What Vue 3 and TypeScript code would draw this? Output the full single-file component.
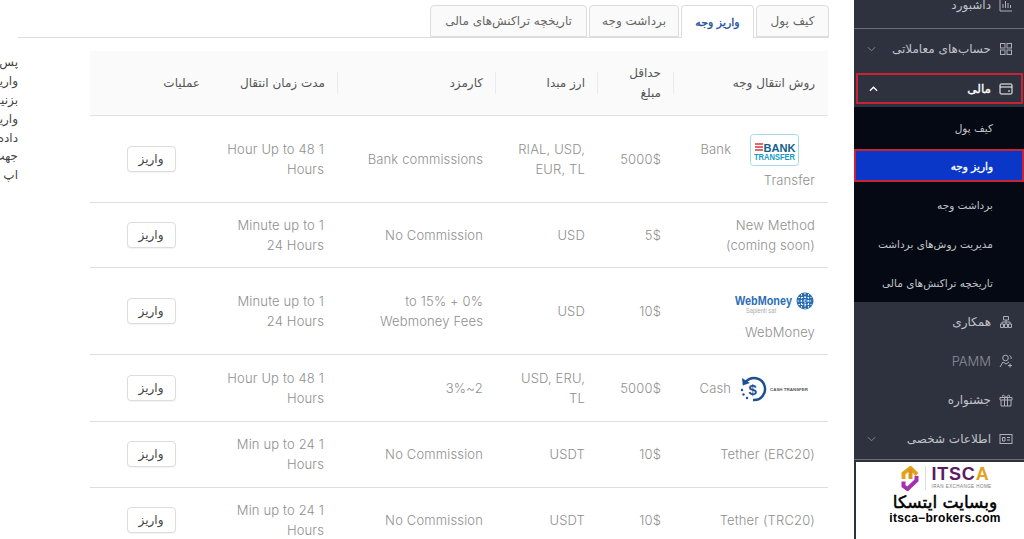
<script setup lang="ts">
interface Row { method: string; logo?: string; min: string; cur: string; fee: string; time: string; h: number }
const rows: Row[] = [
  { method: 'Bank Transfer', logo: 'bank', min: '5000$', cur: 'RIAL, USD, EUR, TL', fee: 'Bank commissions', time: '1 Hour Up to 48 Hours', h: 87 },
  { method: 'New Method (coming soon)', min: '5$', cur: 'USD', fee: 'No Commission', time: '1 Minute up to 24 Hours', h: 65 },
  { method: 'WebMoney', logo: 'wm', min: '10$', cur: 'USD', fee: '0% + 15% to Webmoney Fees', time: '1 Minute up to 24 Hours', h: 87 },
  { method: 'Cash', logo: 'cash', min: '5000$', cur: 'USD, ERU, TL', fee: '2~3%', time: '1 Hour Up to 48 Hours', h: 67 },
  { method: 'Tether (ERC20)', min: '10$', cur: 'USDT', fee: 'No Commission', time: '1 Min up to 24 Hours', h: 66 },
  { method: 'Tether (TRC20)', min: '10$', cur: 'USDT', fee: 'No Commission', time: '1 Min up to 24 Hours', h: 66 },
]
const tabs = ['کیف پول', 'واریز وجه', 'برداشت وجه', 'تاریخچه تراکنش‌های مالی']
const notes = ['پس از انتخاب روش', 'واریز روی دکمه', 'بزنید و مراحل', 'واریز را ادامه', 'داده و سپس', 'جهت پیگیری', 'اپ']
const sub = ['کیف پول', 'واریز وجه', 'برداشت وجه', 'مدیریت روش‌های برداشت', 'تاریخچه تراکنش‌های مالی']
</script>

<template>
  <div class="page">
    <div class="notes">
      <div v-for="n in notes" :key="n" class="note">{{ n }}</div>
    </div>

    <main class="main" dir="rtl">
      <nav class="tabs">
        <span v-for="(t, i) in tabs" :key="t" class="tab" :class="{ active: i === 1 }">{{ t }}</span>
      </nav>
      <table class="tbl">
        <colgroup>
          <col class="c1" /><col class="c2" /><col class="c3" /><col class="c4" /><col class="c5" /><col class="c6" />
        </colgroup>
        <thead>
          <tr>
            <th><span class="th">روش انتقال وجه</span></th>
            <th><span class="th">حداقل مبلغ</span></th>
            <th><span class="th">ارز مبدا</span></th>
            <th><span class="th">کارمزد</span></th>
            <th><span class="th">مدت زمان انتقال</span></th>
            <th><span class="th last">عملیات</span></th>
          </tr>
        </thead>
        <tbody>
          <tr v-for="r in rows" :key="r.method" :style="{ height: r.h + 'px' }">
            <td :class="{ haslogo: r.logo }">
              <svg v-if="r.logo === 'bank'" class="logo" width="80" height="32" viewBox="0 0 80 32">
                <rect x="15.500" y=".5" width="48" height="31" rx="3" fill="#fff" stroke="#a4d9e8" />
                <path d="M20 10h8M20 13h8M20 16h8" stroke="#d8373c" stroke-width="1.600" />
                <text x="28.500" y="17.500" class="bk1" textLength="32" lengthAdjust="spacingAndGlyphs">BANK</text>
                <text x="19" y="25.500" class="bk2" textLength="41" lengthAdjust="spacingAndGlyphs">TRANSFER</text>
              </svg>
              <svg v-if="r.logo === 'wm'" class="logo" width="80" height="32" viewBox="0 0 80 32">
                <text x="0" y="19" class="wm1" textLength="57" lengthAdjust="spacingAndGlyphs">WebMoney</text>
                <text x="11" y="27" class="wm2" textLength="30" lengthAdjust="spacingAndGlyphs">Sapienti sat</text>
                <circle cx="70" cy="15" r="8.500" fill="#2a6db5" />
                <path d="M63.500 11.500h13M62.500 15h15M63.500 18.500h13M66.500 8v14M70 7v16M73.500 8v14" stroke="#fff" stroke-width="1" stroke-dasharray="1.600 1.400" />
              </svg>
              <svg v-if="r.logo === 'cash'" class="logo" width="80" height="32" viewBox="0 0 80 32">
                <path d="M11 8.500A11 11 0 1 1 18 27" fill="none" stroke="#1c4f96" stroke-width="2.500" />
                <path d="M7 5l.8 7.500 7-2.500z" fill="#1c4f96" />
                <circle cx="7" cy="17" r="1.200" fill="#1c4f96" />
                <circle cx="8.500" cy="21.500" r="1.200" fill="#1c4f96" />
                <circle cx="12" cy="25" r="1.200" fill="#1c4f96" />
                <text x="13.500" y="21.500" class="cs1">$</text>
                <text x="35" y="17.500" class="cs2" textLength="38" lengthAdjust="spacingAndGlyphs">CASH TRANSFER</text>
              </svg>
              {{ r.method }}
            </td>
            <td>{{ r.min }}</td>
            <td>{{ r.cur }}</td>
            <td>{{ r.fee }}</td>
            <td class="tm">{{ r.time }}</td>
            <td class="act"><button class="btn">واریز</button></td>
          </tr>
        </tbody>
      </table>
    </main>

    <aside class="side" dir="rtl">
      <div class="item first">
        <svg class="ic" viewBox="0 0 14 14"><path d="M1 1v12h12M4 10V6M6.500 10V3M9 10V5M11.500 10V7" /></svg>
        <span>داشبورد</span>
      </div>
      <div class="rule"></div>
      <div class="item">
        <svg class="ic" viewBox="0 0 14 14"><rect x="1.500" y="1.500" width="4.500" height="4.500" /><rect x="8" y="1.500" width="4.500" height="4.500" /><rect x="1.500" y="8" width="4.500" height="4.500" /><rect x="8" y="8" width="4.500" height="4.500" /></svg>
        <span>حساب‌های معاملاتی</span>
        <svg class="chev" viewBox="0 0 10 6"><path d="M1 1l4 4 4-4" /></svg>
      </div>
      <div class="item open">
        <svg class="ic bright" viewBox="0 0 14 14"><rect x="1" y="2" width="12" height="10" rx="1" /><path d="M1 5h12M9 9h2" /></svg>
        <span>مالی</span>
        <svg class="chev up" viewBox="0 0 10 6"><path d="M1 5l4-4 4 4" /></svg>
      </div>
      <div class="subs">
        <div v-for="(s, i) in sub" :key="s" class="sub" :class="{ on: i === 1 }">{{ s }}</div>
      </div>
      <div class="item">
        <svg class="ic" viewBox="0 0 14 14"><path d="M4.500 1.500h5v3.500h-5zM1.500 9h3v3.500h-3zM5.500 9h3v3.500h-3zM9.500 9h3v3.500h-3zM7 5v4M3 9V7h8v2" /></svg>
        <span>همکاری</span>
      </div>
      <div class="item dim">
        <svg class="ic" viewBox="0 0 14 14"><circle cx="6.500" cy="4" r="2.800" /><path d="M1 13l3-5 3 2 3-2M10.500 1.500c1.500.5 2 2 1.500 3.500M11 9.500v4M9 11.500h4" /></svg>
        <span class="en">PAMM</span>
      </div>
      <div class="item">
        <svg class="ic" viewBox="0 0 14 14"><path d="M1 4.500h12v2.500H1zM2 7v6h10V7M5.500 4.500V13M8.500 4.500V13M4 4.500C2.500 2.500 4 .5 7 4.500c3-4 4.500-2 3 0" /></svg>
        <span>جشنواره</span>
      </div>
      <div class="item">
        <svg class="ic" viewBox="0 0 14 14"><rect x="1" y="2.500" width="12" height="9" /><path d="M8 5.500h3M8 8h3M3.500 9V5.500h2.500V9z" /></svg>
        <span>اطلاعات شخصی</span>
        <svg class="chev" viewBox="0 0 10 6"><path d="M1 1l4 4 4-4" /></svg>
      </div>
      <div class="rule low"></div>
      <div class="brand" dir="ltr">
        <div class="brand-top">
          <svg width="18" height="25" viewBox="0 0 18 25">
            <path d="M2.500 13V7.500L9.500 2 16 8.500" fill="none" stroke="#e5a11c" stroke-width="4" />
            <path d="M9.500 3v10" stroke="#d9951a" stroke-width="4" />
            <path d="M2.500 15.500v4.500l4 3 9-8.500V10" fill="none" stroke="#a62fb0" stroke-width="4" />
          </svg>
          <div class="itsca">
            <div class="itsca-t">ITSC<span class="gold">A</span></div>
            <div class="itsca-s">IRAN EXCHANGE HOME</div>
          </div>
        </div>
        <div class="brand-fa" dir="rtl">وبسایت ایتسکا</div>
        <div class="brand-url">itsca−brokers.com</div>
      </div>
    </aside>
  </div>
</template>

<style>
html, body { margin: 0; background: #fff; overflow: hidden; }
</style>

<style scoped>
.page {
  width: 1024px;
  height: 539px;
  display: flex;
  overflow: hidden;
  background: #fff;
  font-family: "Inter", "DejaVu Sans", sans-serif;
  color: #888;
}
.notes {
  width: 18px;
  flex: none;
  direction: rtl;
  padding-top: 53px;
  box-sizing: border-box;
}
.note {
  height: 18.900px;
  line-height: 19px;
  font-size: 12px;
  color: #444;
  white-space: nowrap;
  font-family: "DejaVu Sans", sans-serif;
}
.main {
  flex: none;
  width: 836px;
  box-sizing: border-box;
  padding: 5px 25px 0 0;
}
.tabs {
  display: flex;
  gap: 2px;
  height: 32px;
  border-bottom: 1px solid #ddd;
  font-family: "DejaVu Sans", sans-serif;
}
.tab {
  display: flex;
  align-items: center;
  justify-content: center;
  height: 32px;
  box-sizing: border-box;
  font-size: 12px;
  color: #666;
  background: #fafafa;
  border: 1px solid #ddd;
  border-radius: 4px 4px 0 0;
  width: 73px;
}
.tab:nth-child(3) { width: 90px; }
.tab:nth-child(4) { width: 157px; }
.tab.active {
  background: #fff;
  height: 33px;
  border-bottom: 0;
  color: #1f4fa0;
  font-size: 11px;
  -webkit-text-stroke: .35px #1f4fa0;
}
.tbl {
  width: 738px;
  margin: 13px 1px 0 0;
  table-layout: fixed;
  border-collapse: collapse;
  font-size: 13px;
  line-height: 20px;
  font-weight: 300;
  letter-spacing: .15px;
}
.c1 { width: 154px; }
.c2 { width: 76px; }
.c3 { width: 102px; }
.c4 { width: 158px; }
.c5 { width: 126px; }
.c6 { width: 122px; }
thead tr { height: 64px; background: #fafafa; border-bottom: 1px solid #e2e2e2; }
th {
  padding: 0 13px;
  font-size: 12px;
  font-weight: 400;
  color: #555;
  letter-spacing: 0;
  text-align: right;
  font-family: "DejaVu Sans", sans-serif;
  background: linear-gradient(#ececec, #ececec) no-repeat right center / 1px 22px;
}
th:first-child, th:last-child { background: none; }
.th { display: block; line-height: 20px; }
.th.last { padding-right: 0; margin-right: -1px; }
td {
  padding: 0 13px;
  text-align: right;
  border-bottom: 1px solid #dedede;
  vertical-align: middle;
  color: #8f8f8f;
}
td.haslogo { padding-top: 6px; }
td.tm { padding-right: 14px; }
.logo {
  direction: ltr;
  vertical-align: -16px;
  margin-bottom: 4px;
  overflow: visible;
}
.bk1 { font: 800 11px "Liberation Sans", sans-serif; fill: #12618c; letter-spacing: 0; }
.bk2 { font: 800 8.500px "Liberation Sans", sans-serif; fill: #139bc4; letter-spacing: 0; }
.wm1 { font: 700 13px "Liberation Sans", sans-serif; fill: #2a6db5; letter-spacing: 0; }
.wm2 { font: 400 6.500px "Liberation Sans", sans-serif; fill: #aaa; letter-spacing: 0; }
.cs1 { font: 700 15px "Liberation Sans", sans-serif; fill: #1c4f96; }
.cs2 { font: 700 4px "Liberation Sans", sans-serif; fill: #555; letter-spacing: 0; }
.act { padding: 0; text-align: center; }
.btn {
  width: 49px;
  height: 26px;
  padding: 0;
  background: #fff;
  border: 1px solid #ddd;
  border-radius: 4px;
  box-shadow: 0 1px 1px rgba(0, 0, 0, .05);
  color: #444;
  font: 400 12px "DejaVu Sans", sans-serif;
}
.side {
  flex: 1;
  background: #2e323e;
  color: #c0c2c9;
  font-family: "DejaVu Sans", sans-serif;
  font-size: 12px;
  display: flex;
  flex-direction: column;
  height: 539px;
}
.item {
  flex: none;
  height: 39px;
  display: flex;
  align-items: center;
  gap: 8px;
  padding: 0 11px 0 8px;
}
.item.first { height: 38px; margin-top: -14px; margin-bottom: 4px; }
.rule { height: 1px; background: #6c6f78; flex: none; }
.item.open {
  height: 31px;
  margin: 5px 1px 0 2px;
  outline: 2px solid #c62434;
  outline-offset: -2px;
  color: #fff;
  -webkit-text-stroke: .35px #fff;
  padding-right: 10px;
}
.item.dim { color: #8c8f97; }
.en { font-family: "Inter", sans-serif; font-size: 13px; font-weight: 300; }
.ic { width: 14px; height: 14px; flex: none; fill: none; stroke: #aeb0b7; stroke-width: 1; -webkit-text-stroke: 0; }
.ic.bright { stroke: #fff; }
.chev { width: 9px; height: 6px; flex: none; margin-right: auto; margin-left: 5px; fill: none; stroke: #8c8f97; stroke-width: 1; }
.chev.up { stroke: #fff; stroke-width: 1.500; }
.subs {
  flex: none;
  background: #040913;
  margin-top: 3px;
  height: 195px;
  font-size: 10.500px;
  padding-top: 1px;
  box-sizing: border-box;
}
.sub {
  height: 39px;
  display: flex;
  align-items: center;
  padding-right: 31px;
  color: #c0c2c8;
}
.sub.on {
  height: 33px;
  margin: 2px 0 3px;
  background: #0a37c8;
  color: #fff;
  -webkit-text-stroke: .35px #fff;
  outline: 2px solid #c62434;
  outline-offset: -2px;
}
.rule.low { margin-top: 1px; }
.brand {
  flex: none;
  margin: 2px 0 0 2px;
  height: 77px;
  background: #fff;
  color: #000;
  display: flex;
  flex-direction: column;
  align-items: center;
  padding: 3px 0 0 10px;
  box-sizing: border-box;
}
.brand-top { display: flex; gap: 6px; align-items: center; height: 26px; margin-left: 3px; }
.itsca { border-left: 1px solid #ddd; padding-left: 5px; height: 24px; }
.itsca-t { font: 800 18px/17px "Liberation Sans", sans-serif; color: #5b1a63; letter-spacing: .8px; }
.gold { color: #e5a11c; }
.itsca-s { font: 400 4.500px/7px "Liberation Sans", sans-serif; color: #777; letter-spacing: .45px; white-space: nowrap; }
.brand-fa { font-size: 17px; -webkit-text-stroke: .5px #000; line-height: 20px; margin-top: 1px; }
.brand-url { font: 700 12px/13px "Liberation Sans", sans-serif; letter-spacing: .3px; }
</style>
